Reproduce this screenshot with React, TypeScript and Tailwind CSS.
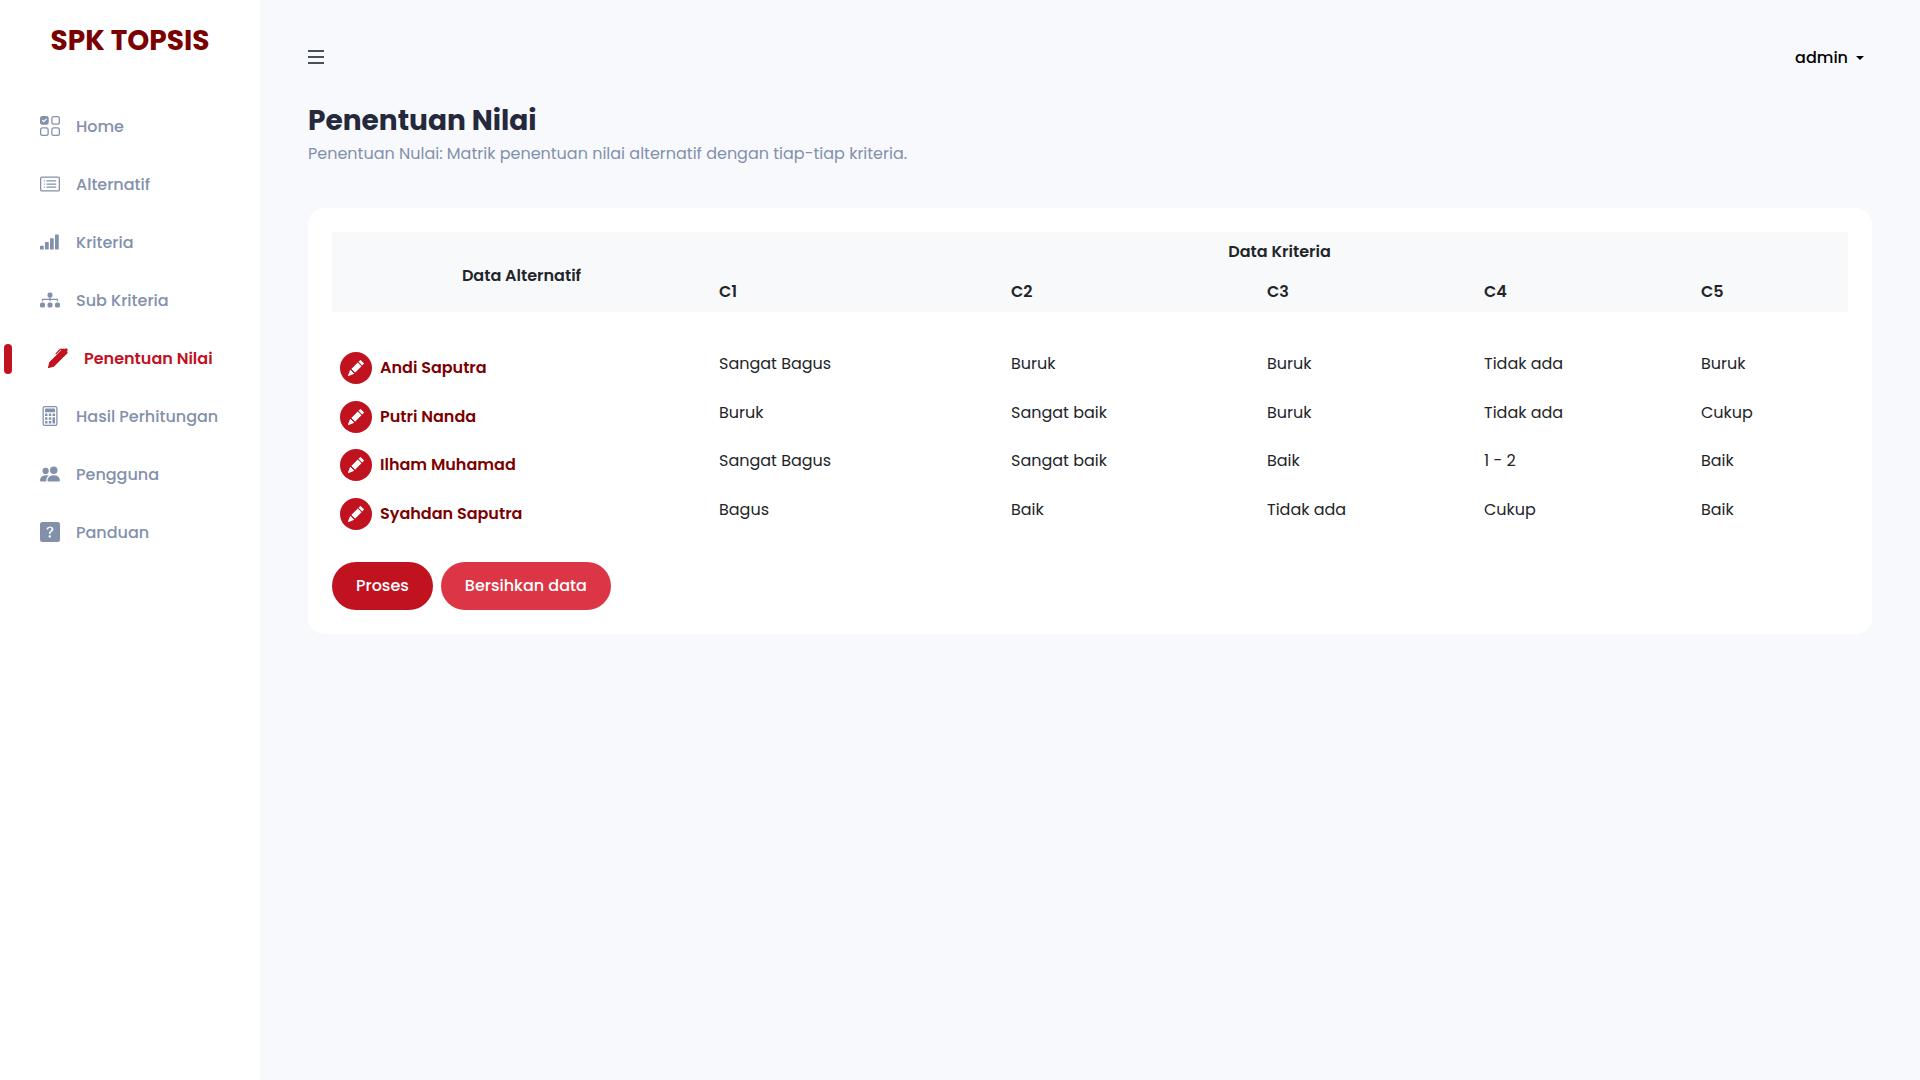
import React from "react";
import {
  BsUiChecksGrid,
  BsCardList,
  BsReception4,
  BsDiagram3Fill,
  BsPenFill,
  BsCalculator,
  BsPeopleFill,
  BsQuestionSquareFill,
  BsPencilFill,
} from "react-icons/bs";

const menu = [
  { label: "Home", icon: BsUiChecksGrid },
  { label: "Alternatif", icon: BsCardList },
  { label: "Kriteria", icon: BsReception4 },
  { label: "Sub Kriteria", icon: BsDiagram3Fill },
  { label: "Penentuan Nilai", icon: BsPenFill, active: true },
  { label: "Hasil Perhitungan", icon: BsCalculator },
  { label: "Pengguna", icon: BsPeopleFill },
  { label: "Panduan", icon: BsQuestionSquareFill },
];

const criteria = ["C1", "C2", "C3", "C4", "C5"];

const rows = [
  { name: "Andi Saputra", values: ["Sangat Bagus", "Buruk", "Buruk", "Tidak ada", "Buruk"] },
  { name: "Putri Nanda", values: ["Buruk", "Sangat baik", "Buruk", "Tidak ada", "Cukup"] },
  { name: "Ilham Muhamad", values: ["Sangat Bagus", "Sangat baik", "Baik", "1 - 2", "Baik"] },
  { name: "Syahdan Saputra", values: ["Bagus", "Baik", "Tidak ada", "Cukup", "Baik"] },
];

function Sidebar() {
  return (
    <aside className="w-[260px] shrink-0 bg-white">
      <h2 className="pt-[21px] text-center text-[28px] leading-10 font-bold text-[#7b0000]">SPK TOPSIS</h2>
      <nav className="mt-[37px]">
        <ul>
          {menu.map(({ label, icon: Icon, active }) => (
            <li key={label}>
              <a
                href="#"
                className={
                  active
                    ? "flex h-[58px] items-center pl-1 font-semibold text-[#c1121f]"
                    : "flex h-[58px] items-center pl-10 font-medium text-[#8390aa]"
                }
              >
                {active && <span className="mr-9 h-[30px] w-2 rounded bg-[#c1121f]" />}
                <Icon size={20} className="mb-0.5 shrink-0" />
                <span className="ml-4 whitespace-nowrap">{label}</span>
              </a>
            </li>
          ))}
        </ul>
      </nav>
    </aside>
  );
}

function ScoreTable() {
  return (
    <table className="w-full table-fixed text-left">
      <colgroup>
        <col className="w-[379px]" />
        <col className="w-[292px]" />
        <col className="w-[256px]" />
        <col className="w-[217px]" />
        <col className="w-[217px]" />
        <col className="w-[155px]" />
      </colgroup>
      <thead className="bg-[#f8f9fa]">
        <tr className="h-10">
          <th rowSpan={2} className="px-2 pt-2 text-center font-semibold">Data Alternatif</th>
          <th colSpan={5} className="px-2 text-center font-semibold">Data Kriteria</th>
        </tr>
        <tr className="h-10">
          {criteria.map((c) => (
            <th key={c} className="px-2 font-semibold">{c}</th>
          ))}
        </tr>
      </thead>
      <tbody className="before:block before:h-8">
        {rows.map((row) => (
          <tr key={row.name} className="odd:h-[49px] even:h-12">
            <td className="px-2 pt-2 align-top">
              <div className="flex items-center gap-2">
                <button
                  type="button"
                  aria-label={`Edit ${row.name}`}
                  className="flex size-8 items-center justify-center rounded-full bg-[#c1121f] text-white"
                >
                  <BsPencilFill size={16} />
                </button>
                <span className="font-semibold text-[#7b0000]">{row.name}</span>
              </div>
            </td>
            {row.values.map((value, i) => (
              <td key={i} className="px-2 pt-2 align-top">{value}</td>
            ))}
          </tr>
        ))}
      </tbody>
    </table>
  );
}

export default function App() {
  return (
    <div className="flex min-h-screen bg-[#f8f9fd] font-['Poppins','Inter',sans-serif] text-base text-[#212529]">
      <Sidebar />
      <main className="min-w-0 flex-1 px-12 pt-10">
        <header className="flex h-[34px] items-center justify-between">
          <button type="button" aria-label="Menu" className="flex w-4 flex-col gap-1 text-[#495057]">
            <span className="h-0.5 bg-current" />
            <span className="h-0.5 bg-current" />
            <span className="h-0.5 bg-current" />
          </button>
          <button type="button" className="mr-2 flex items-center gap-2 pt-0.5 font-medium text-black">
            admin
            <span className="border-x-4 border-t-4 border-x-transparent border-t-current" />
          </button>
        </header>
        <h1 className="mt-[29px] text-[28px] leading-9 font-bold text-[#25293c]">Penentuan Nilai</h1>
        <p className="mt-[3px] text-[#8390aa]">Penentuan Nulai: Matrik penentuan nilai alternatif dengan tiap-tiap kriteria.</p>
        <section className="mt-[42px] rounded-2xl bg-white p-6">
          <ScoreTable />
          <div className="mt-6 flex gap-2 font-medium text-white">
            <button type="button" className="h-12 rounded-full bg-[#c1121f] px-6">Proses</button>
            <button type="button" className="h-12 rounded-full bg-[#dc3545] px-6">Bersihkan data</button>
          </div>
        </section>
      </main>
    </div>
  );
}
